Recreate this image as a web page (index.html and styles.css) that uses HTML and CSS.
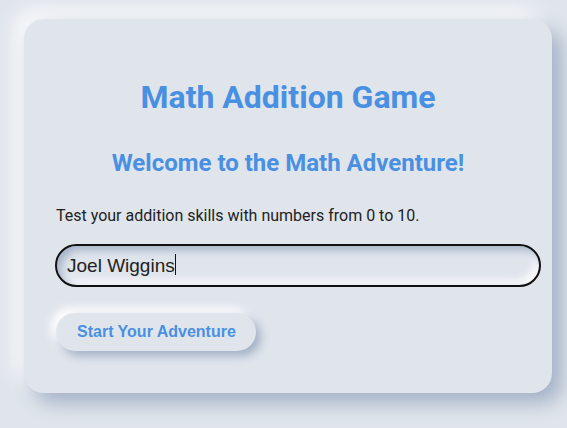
FILE: index.html
```html
<!DOCTYPE html>
<html lang="en">
<head>
<meta charset="utf-8">
<title>Math Addition Game</title>
<link rel="stylesheet" href="styles.css">
</head>
<body>
<div class="card">
  <h1 class="title">Math Addition Game</h1>
  <h2 class="subtitle">Welcome to the Math Adventure!</h2>
  <p class="intro">Test your addition skills with numbers from 0 to 10.</p>
  <div class="field"><input class="name-input" type="text" value="Joel Wiggins"><span class="caret"></span></div>
  <button class="start-btn">Start Your Adventure</button>
</div>
</body>
</html>
```

FILE: styles.css
```css
html, body {
  margin: 0;
  background: #e0e5ec;
}
body {
  padding: 19px 0 35px 24px;
  font-family: Roboto, "Liberation Sans", sans-serif;
  color: #333;
}
.card {
  box-sizing: border-box;
  width: 528px;
  height: 374px;
  background: #e0e5ec;
  border-radius: 20px;
  padding: 30px 32px;
  box-shadow: 10px 10px 20px #a3b1c6, -10px -10px 20px rgba(255, 255, 255, 0.8);
}
.title {
  margin: 28px 0 0;
  text-align: center;
  color: #4a90e2;
  font-size: 32px;
  font-weight: 700;
  line-height: 40px;
}
.subtitle {
  margin: 32px 0 0;
  text-align: center;
  color: #4a90e2;
  font-size: 24px;
  font-weight: 700;
  line-height: 28px;
}
.intro {
  margin: 29px 0 0;
  font-size: 16px;
  line-height: 20px;
  color: #222;
}
.field {
  margin-top: 18px;
  position: relative;
}
.name-input {
  display: block;
  box-sizing: border-box;
  width: calc(100% + 22px);
  height: 43px;
  margin: 0 0 0 -1px;
  padding: 0 10px;
  border: 2px solid #111;
  border-radius: 22px;
  background: #e0e5ec;
  box-shadow: inset 4px 4px 8px #a3b1c6, inset -4px -4px 8px #ffffff;
  font-family: "Liberation Sans", Arial, sans-serif;
  font-size: 19px;
  color: #222;
  outline: none;
}
.caret {
  position: absolute;
  left: 119px;
  top: 10px;
  width: 1px;
  height: 21px;
  background: #111;
}
.start-btn {
  display: block;
  box-sizing: border-box;
  height: 38px;
  margin-top: 26px;
  padding: 0 20px 0 21px;
  border: none;
  border-radius: 20px;
  background: #e0e5ec;
  box-shadow: 5px 5px 10px #a3b1c6, -5px -5px 10px #ffffff;
  font-family: "Liberation Sans", Arial, sans-serif;
  font-size: 16px;
  font-weight: 700;
  color: #4a90e2;
  line-height: 18px;
}
```
